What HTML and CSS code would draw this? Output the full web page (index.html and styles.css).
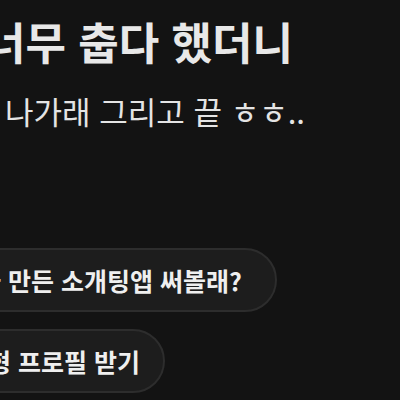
FILE: index.html
```html
<!DOCTYPE html>
<html lang="ko">
<head>
<meta charset="utf-8">
<link rel="stylesheet" href="styles.css">
</head>
<body>
<main class="screen">
  <h1 class="title">너무 춥다 했더니</h1>
  <p class="subtitle">나가래 그리고 끝 ㅎㅎ..</p>
  <div class="actions">
    <button class="pill pill-wide">내가 만든 소개팅앱 써볼래?</button>
    <button class="pill pill-narrow">유형 프로필 받기</button>
  </div>
</main>
</body>
</html>
```
FILE: styles.css
```css
html, body {
  margin: 0;
  padding: 0;
  background: #131313;
  overflow: hidden;
}
.screen {
  width: 400px;
  height: 400px;
  font-family: "Noto Sans CJK KR", "Noto Sans", sans-serif;
  color: #e6e6e6;
  display: flex;
  flex-direction: column;
}
.title {
  margin: 13px 0 0 -15px;
  font-size: 44px;
  font-weight: 700;
  line-height: 56px;
  white-space: nowrap;
  color: #e8e8e8;
}
.subtitle {
  margin: 24px 0 0 5px;
  font-size: 31px;
  font-weight: 400;
  line-height: 36px;
  white-space: nowrap;
  color: #e4e4e4;
}
.actions {
  margin-top: 119px;
  display: flex;
  flex-direction: column;
  align-items: flex-start;
  gap: 17px;
}
.pill {
  font-family: inherit;
  font-size: 25px;
  font-weight: 700;
  color: #efefef;
  background: #1d1d1d;
  border: 2px solid #2d2d2d;
  border-radius: 32px;
  height: 64px;
  padding: 0 30px 0 0;
  white-space: nowrap;
  display: flex;
  align-items: center;
}
.pill-wide {
  margin-left: -47px;
  padding-right: 33px;
}
.pill-narrow {
  margin-left: -37px;
  padding-right: 23px;
}
```
